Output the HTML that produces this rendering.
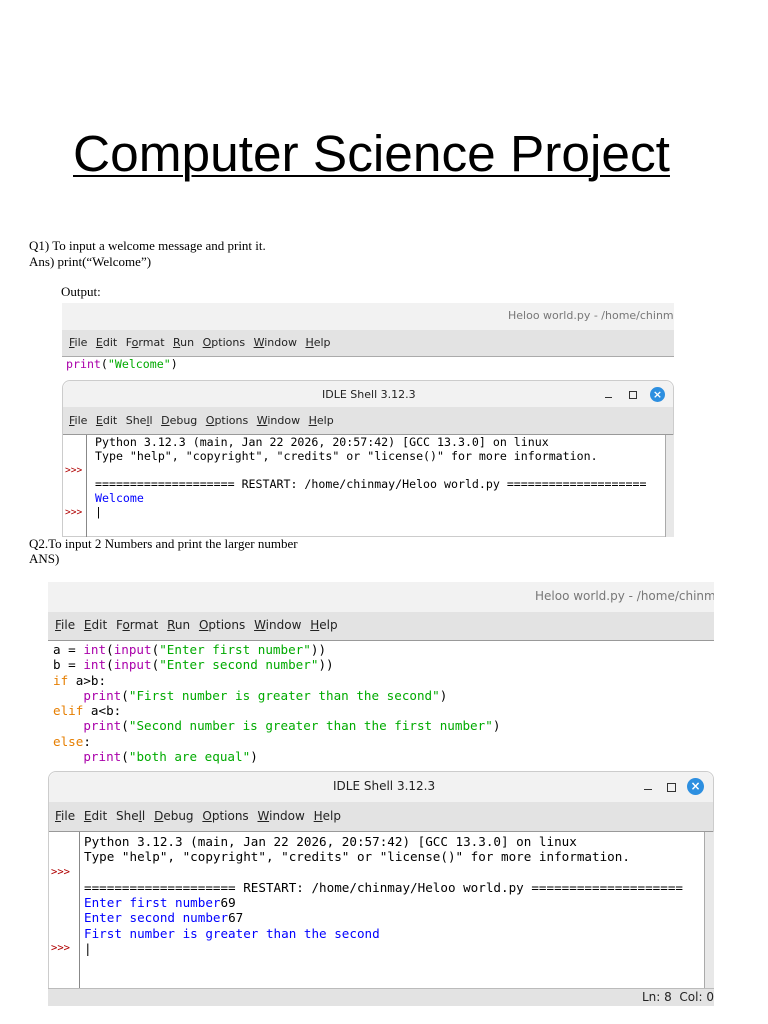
<!DOCTYPE html>
<html><head><meta charset="utf-8"><style>
*{margin:0;padding:0;box-sizing:border-box}
body{width:768px;height:1024px;background:#fff;position:relative;overflow:hidden;font-family:"Liberation Serif",serif;color:#000}
.a{position:absolute;white-space:pre}
.s{font-family:"Liberation Serif",serif;font-size:13px}
.ui{font-family:"DejaVu Sans","Liberation Sans",sans-serif;color:#222}
.m{font-family:"DejaVu Sans Mono","Liberation Mono",monospace}
.p{color:#a0a}.g{color:#0a0}.o{color:#e67e00}.b{color:#00f}.r{color:#b00000}
</style></head><body>
<div class="a" style="left:73px;top:123px;font-family:'Liberation Sans',sans-serif;font-size:51.4px;line-height:60px;text-decoration:underline;text-decoration-thickness:2px;text-underline-offset:4px">Computer Science Project</div>
<div class="a s" style="left:29px;top:238px">Q1) To input a welcome message and print it.</div>
<div class="a s" style="left:29px;top:254px">Ans) print(“Welcome”)</div>
<div class="a s" style="left:61px;top:284px">Output:</div>

<!-- image 1 -->
<div class="a" style="left:62px;top:303px;width:612px;height:234px;background:#fff;overflow:hidden">
 <div class="a" style="left:0;top:0;width:612px;height:27px;background:#f2f2f2"></div>
 <div class="a ui" style="left:446px;top:6px;font-size:11px;color:#777">Heloo world.py - /home/chinma</div>
 <div class="a" style="left:0;top:27px;width:612px;height:27px;background:#e3e3e3;border-bottom:1px solid #aaa"></div>
 <div class="a ui" style="left:7px;top:33px;font-size:11px;word-spacing:5px"><u>F</u>ile <u>E</u>dit F<u>o</u>rmat <u>R</u>un <u>O</u>ptions <u>W</u>indow <u>H</u>elp</div>
 <div class="a m" style="left:4px;top:54px;font-size:11.6px"><span class="p">print</span>(<span class="g">"Welcome"</span>)</div>
 <div class="a" style="left:0;top:77px;width:612px;height:157px;background:#fff;border:1px solid #ccc;border-radius:8px 8px 0 0"></div>
 <div class="a" style="left:1px;top:78px;width:610px;height:26px;background:#f2f2f2;border-radius:8px 8px 0 0"></div>
 <div class="a ui" style="left:260px;top:85px;font-size:11px;color:#222">IDLE Shell 3.12.3</div>
 <div class="a" style="left:543px;top:94px;width:7px;height:1px;background:#333"></div>
 <div class="a" style="left:567px;top:88px;width:8px;height:8px;border:1px solid #333"></div>
 <div class="a" style="left:588px;top:84px;width:15px;height:15px;border-radius:50%;background:#2d8fe0;color:#fff;font:bold 11px/15px 'DejaVu Sans',sans-serif;text-align:center">×</div>
 <div class="a" style="left:1px;top:104px;width:610px;height:28px;background:#e3e3e3;border-bottom:1px solid #999"></div>
 <div class="a ui" style="left:7px;top:111px;font-size:11px;word-spacing:5px"><u>F</u>ile <u>E</u>dit She<u>l</u>l <u>D</u>ebug <u>O</u>ptions <u>W</u>indow <u>H</u>elp</div>
 <div class="a" style="left:24px;top:132px;width:1px;height:102px;background:#888"></div>
 <div class="a" style="left:603px;top:132px;width:9px;height:102px;background:#e8e8e8;border-left:1px solid #aaa"></div>
 <div class="a m" style="left:33px;top:133px;font-size:11.6px;line-height:13.9px">Python 3.12.3 (main, Jan 22 2026, 20:57:42) [GCC 13.3.0] on linux
Type "help", "copyright", "credits" or "license()" for more information.

==================== RESTART: /home/chinmay/Heloo world.py ====================
<span class="b">Welcome</span>
|</div>
 <div class="a m r" style="left:3px;top:161px;font-size:9.5px;line-height:13.9px">&gt;&gt;&gt;


&gt;&gt;&gt;</div>
</div>

<div class="a s" style="left:29px;top:536px">Q2.To input 2 Numbers and print the larger number</div>
<div class="a s" style="left:29px;top:551px">ANS)</div>

<!-- image 2 -->
<div class="a" style="left:48px;top:582px;width:666px;height:424px;background:#fff;overflow:hidden">
 <div class="a" style="left:0;top:0;width:666px;height:30px;background:#f2f2f2"></div>
 <div class="a ui" style="left:487px;top:7px;font-size:12px;color:#777">Heloo world.py - /home/chinma</div>
 <div class="a" style="left:0;top:30px;width:666px;height:29px;background:#e3e3e3;border-bottom:1px solid #999"></div>
 <div class="a ui" style="left:7px;top:36px;font-size:12px;word-spacing:5px"><u>F</u>ile <u>E</u>dit F<u>o</u>rmat <u>R</u>un <u>O</u>ptions <u>W</u>indow <u>H</u>elp</div>
 <div class="a m" style="left:5px;top:60px;font-size:12.6px;line-height:15.3px">a = <span class="p">int</span>(<span class="p">input</span>(<span class="g">"Enter first number"</span>))
b = <span class="p">int</span>(<span class="p">input</span>(<span class="g">"Enter second number"</span>))
<span class="o">if</span> a&gt;b:
    <span class="p">print</span>(<span class="g">"First number is greater than the second"</span>)
<span class="o">elif</span> a&lt;b:
    <span class="p">print</span>(<span class="g">"Second number is greater than the first number"</span>)
<span class="o">else</span>:
    <span class="p">print</span>(<span class="g">"both are equal"</span>)</div>
 <div class="a" style="left:0;top:189px;width:666px;height:235px;background:#fff;border:1px solid #ccc;border-radius:8px 8px 0 0"></div>
 <div class="a" style="left:1px;top:190px;width:664px;height:30px;background:#f2f2f2;border-radius:8px 8px 0 0"></div>
 <div class="a ui" style="left:285px;top:197px;font-size:12px;color:#222">IDLE Shell 3.12.3</div>
 <div class="a" style="left:596px;top:207px;width:8px;height:1px;background:#333"></div>
 <div class="a" style="left:619px;top:201px;width:9px;height:9px;border:1px solid #333"></div>
 <div class="a" style="left:639px;top:196px;width:17px;height:17px;border-radius:50%;background:#2d8fe0;color:#fff;font:bold 12px/17px 'DejaVu Sans',sans-serif;text-align:center">×</div>
 <div class="a" style="left:1px;top:220px;width:664px;height:30px;background:#e3e3e3;border-bottom:1px solid #999"></div>
 <div class="a ui" style="left:7px;top:227px;font-size:12px;word-spacing:5px"><u>F</u>ile <u>E</u>dit She<u>l</u>l <u>D</u>ebug <u>O</u>ptions <u>W</u>indow <u>H</u>elp</div>
 <div class="a" style="left:31px;top:250px;width:1px;height:156px;background:#888"></div>
 <div class="a" style="left:656px;top:250px;width:10px;height:156px;background:#e8e8e8;border-left:1px solid #aaa"></div>
 <div class="a m" style="left:36px;top:252px;font-size:12.6px;line-height:15.3px">Python 3.12.3 (main, Jan 22 2026, 20:57:42) [GCC 13.3.0] on linux
Type "help", "copyright", "credits" or "license()" for more information.

==================== RESTART: /home/chinmay/Heloo world.py ====================
<span class="b">Enter first number</span>69
<span class="b">Enter second number</span>67
<span class="b">First number is greater than the second</span>
|</div>
 <div class="a m r" style="left:3px;top:283px;font-size:10.5px;line-height:15.3px">&gt;&gt;&gt;




&gt;&gt;&gt;</div>
 <div class="a" style="left:0;top:406px;width:666px;height:18px;background:#e3e3e3;border-top:1px solid #bbb"></div>
 <div class="a ui" style="left:594px;top:408px;font-size:12px">Ln: 8  Col: 0</div>
</div>
</body></html>
